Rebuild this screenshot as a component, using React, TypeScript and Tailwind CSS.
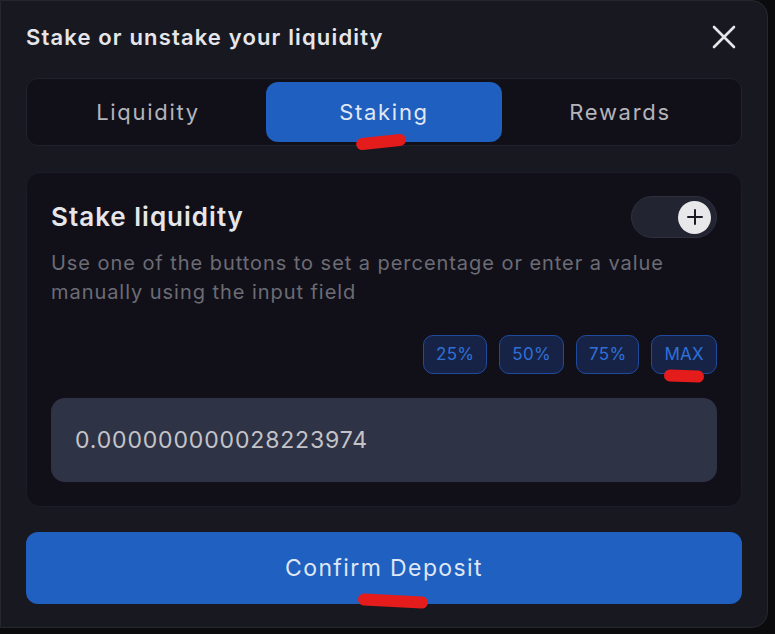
import React from 'react';

const font = { fontFamily: 'Inter, "Open Sans", sans-serif' };

const Mark = ({ className }: { className: string }) => (
	<span className={`absolute h-[12px] rounded-full bg-[#e51c1c] ${className}`} />
);

const App: React.FC = () => {
	const presets = ['25%', '50%', '75%', 'MAX'];

	return (
		<div className="w-[775px] h-[634px] bg-[#0b0b0e] overflow-hidden" style={font}>
			<div className="relative w-[768px] h-[628px] bg-[#181821] border border-[#26262f] rounded-br-[16px] rounded-tr-[16px] px-[25px] pt-[20px]">
				<div className="flex items-center justify-between h-[32px]">
					<h2 className="text-[22px] font-semibold text-[#e6e6ea] tracking-[1.15px]">
						Stake or unstake your liquidity
					</h2>
					<button className="w-[30px] h-[30px] flex items-center justify-center text-[#e6e6ea] mr-[3px]">
						<svg width="24" height="24" viewBox="0 0 24 24" fill="none" stroke="currentColor" strokeWidth="2.6" strokeLinecap="round">
							<path d="M2 2 L22 22 M22 2 L2 22" />
						</svg>
					</button>
				</div>

				<div className="mt-[25px] h-[68px] rounded-[12px] bg-[#111019] border border-[#22222c] flex items-center px-[3px] gap-0">
					<button className="flex-1 h-[60px] rounded-[12px] text-[22px] tracking-[1.7px] text-[#b4b4ba]">Liquidity</button>
					<button className="flex-1 h-[60px] rounded-[12px] text-[22px] tracking-[1.7px] bg-[#1f5fbf] text-[#e2e8f4]">Staking</button>
					<button className="flex-1 h-[60px] rounded-[12px] text-[22px] tracking-[1.7px] text-[#b4b4ba]">Rewards</button>
				</div>

				<div className="mt-[26px] rounded-[14px] bg-[#111019] border border-[#1c1c26] px-[24px] pt-[23px] pb-[24px]">
					<div className="flex items-center justify-between">
						<h3 className="text-[26px] font-semibold text-[#e6e6ea] leading-[42px] tracking-[1px]">Stake liquidity</h3>
						<div className="w-[86px] h-[42px] rounded-full bg-[#232431] border border-[#2e2f3c] flex items-center justify-end pr-[5px]">
							<span className="w-[33px] h-[33px] rounded-full bg-[#e8e8ea] flex items-center justify-center">
								<svg width="18" height="18" viewBox="0 0 18 18" stroke="#1a1a22" strokeWidth="2" strokeLinecap="round">
									<path d="M9 2 V16 M2 9 H16" />
								</svg>
							</span>
						</div>
					</div>
					<p className="mt-[11px] text-[20px] leading-[29px] text-[#6c6c75] w-[640px] tracking-[0.95px]">
						Use one of the buttons to set a percentage or enter a value manually using the input field
					</p>
					<div className="mt-[28px] flex justify-end gap-[12px]">
						{presets.map((p) => (
							<button
								key={p}
								className="h-[39px] px-[12px] rounded-[10px] bg-[#172346] border border-[#1f4b9e] text-[17px] text-[#2f70d8] tracking-[0.3px]"
							>
								{p}
							</button>
						))}
					</div>
					<div className="mt-[24px] h-[84px] rounded-[14px] bg-[#2f3346] flex items-center px-[24px]">
						<span className="text-[23px] text-[#c4c4c8] tracking-[0.85px]">0.000000000028223974</span>
					</div>
				</div>

				<button className="mt-[25px] w-full h-[72px] rounded-[12px] bg-[#1f60c0] text-[23px] tracking-[1.4px] text-[#dfe6f4]">
					Confirm Deposit
				</button>

				<Mark className="left-[355px] top-[135px] w-[50px] -rotate-6" />
				<Mark className="left-[663px] top-[369px] w-[40px] rotate-2" />
				<Mark className="left-[357px] top-[594px] w-[70px] rotate-3" />
			</div>
		</div>
	);
};

export default App;
